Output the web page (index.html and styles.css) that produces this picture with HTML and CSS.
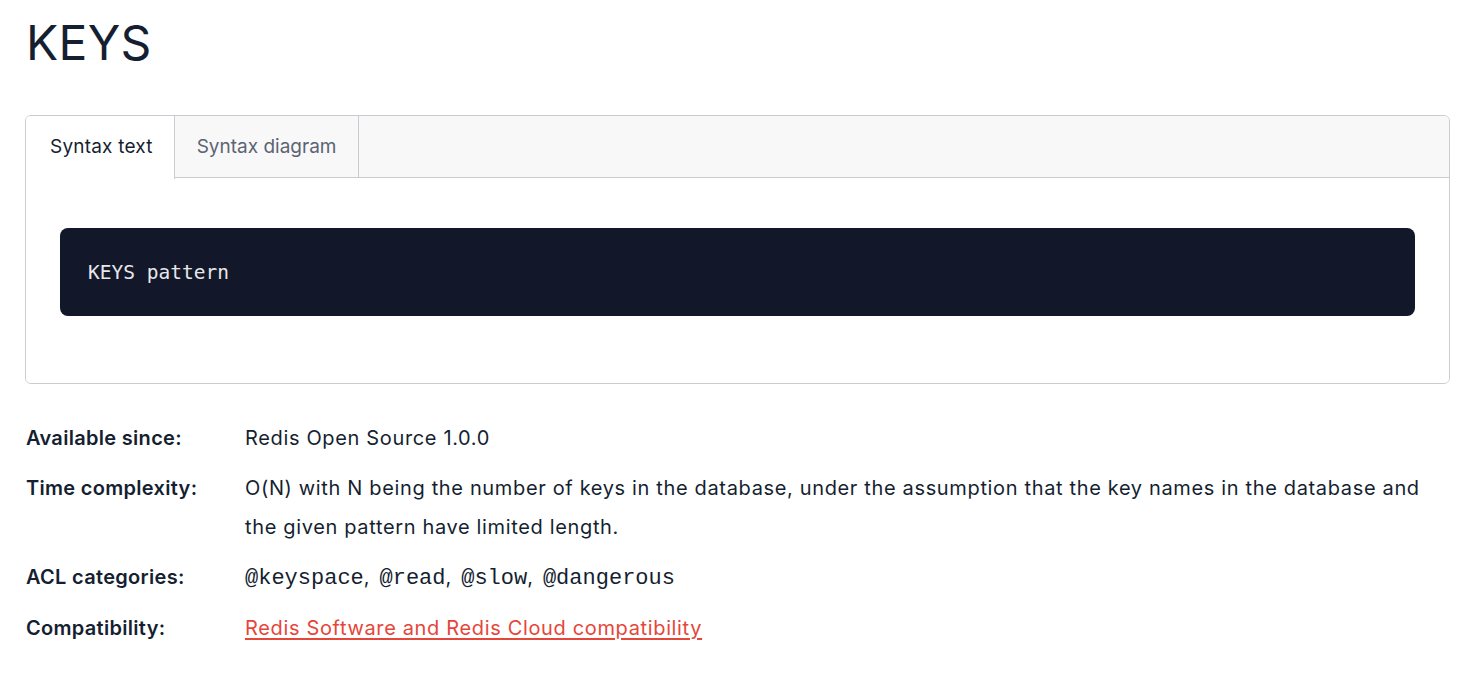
FILE: index.html
```html
<!DOCTYPE html>
<html lang="en">
<head>
<meta charset="utf-8">
<title>KEYS</title>
<link rel="stylesheet" href="styles.css">
</head>
<body>
<main class="page">
  <h1 class="title">KEYS</h1>
  <section class="tabs">
    <div class="tab-bar">
      <div class="tab tab-active">Syntax text</div>
      <div class="tab">Syntax diagram</div>
    </div>
    <div class="tab-panel">
      <pre class="code-block"><code>KEYS pattern</code></pre>
    </div>
  </section>
  <dl class="meta">
    <dt class="meta-label">Available since:</dt>
    <dd class="meta-value">Redis Open Source 1.0.0</dd>
    <dt class="meta-label">Time complexity:</dt>
    <dd class="meta-value">O(N) with N being the number of keys in the database, under the assumption that the key names in the database and the given pattern have limited length.</dd>
    <dt class="meta-label">ACL categories:</dt>
    <dd class="meta-value"><code class="acl">@keyspace</code>, <code class="acl">@read</code>, <code class="acl">@slow</code>, <code class="acl">@dangerous</code></dd>
    <dt class="meta-label">Compatibility:</dt>
    <dd class="meta-value"><a class="link" href="#">Redis Software and Redis Cloud compatibility</a></dd>
  </dl>
</main>
</body>
</html>
```

FILE: styles.css
```css
* { box-sizing: border-box; }
html, body { margin: 0; padding: 0; background: #ffffff; }
body {
  font-family: "Inter", "Liberation Sans", sans-serif;
  color: #161f31;
}
.page {
  padding: 14px 31px 0 25px;
}
.title {
  margin: 0 0 0 1px;
  font-size: 48px;
  font-weight: 400;
  line-height: 58px;
  letter-spacing: 0.3px;
  color: #161f31;
}
.tabs {
  margin-top: 43px;
  border: 1px solid #c9ccd0;
  border-radius: 6px;
  overflow: hidden;
}
.tab-bar {
  display: flex;
  background: #f8f8f8;
  border-bottom: 1px solid #c9ccd0;
  height: 62px;
}
.tab {
  display: flex;
  align-items: center;
  padding: 0 22px 2px 22px;
  font-size: 19px;
  color: #5b6473;
  border-right: 1px solid #c9ccd0;
  height: 62px;
}
.tab-active {
  background: #ffffff;
  color: #161f31;
  margin-bottom: -1px;
  height: 63px;
  padding-left: 24px;
  padding-right: 21px;
  letter-spacing: 0.2px;
}
.tab-panel {
  background: #ffffff;
  padding: 50px 34px 67px 34px;
}
.code-block {
  margin: 0;
  background: #121729;
  border-radius: 8px;
  height: 88px;
  padding: 0 28px;
  display: flex;
  align-items: center;
  font-family: "DejaVu Sans Mono", monospace;
  font-size: 19.5px;
  color: #e8e8ea;
}
.code-block code { font-family: inherit; }
.meta {
  margin: 35px 0 0 1px;
  display: grid;
  grid-template-columns: 219px 1fr;
  row-gap: 11px;
  font-size: 20px;
  line-height: 39px;
}
.meta-label {
  font-weight: 600;
  margin: 0;
  letter-spacing: 0.3px;
}
.meta-value {
  margin: 0;
  font-weight: 400;
  letter-spacing: 0.65px;
}
.acl {
  font-family: "Liberation Mono", monospace;
  font-size: 22px;
  letter-spacing: 0;
}
.acl + .acl {
  margin-left: 3px;
}
.link {
  color: #e5463a;
  text-decoration: underline;
  text-decoration-thickness: 1.5px;
  text-underline-offset: 3px;
}
```
